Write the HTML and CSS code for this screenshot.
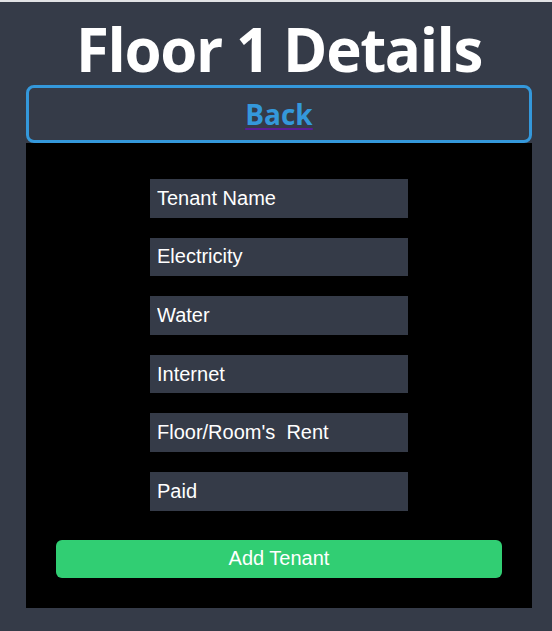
FILE: index.html
```html
<!DOCTYPE html>
<html lang="en">
<head>
<meta charset="utf-8">
<title>Floor 1 Details</title>
<link rel="stylesheet" href="styles.css">
</head>
<body>
<div class="page">
  <h1 class="title">Floor 1 Details</h1>
  <a class="back" href="#"><span class="back-text">Back</span></a>
  <form class="panel">
    <input class="field" type="text" placeholder="Tenant Name">
    <input class="field" type="text" placeholder="Electricity">
    <input class="field" type="text" placeholder="Water">
    <input class="field" type="text" placeholder="Internet">
    <input class="field" type="text" placeholder="Floor/Room's&nbsp; Rent">
    <input class="field" type="text" placeholder="Paid">
    <button class="add" type="button">Add Tenant</button>
  </form>
</div>
</body>
</html>
```

FILE: styles.css
```css
html, body {
  margin: 0;
  padding: 0;
  background: #353b48;
}

.page {
  border-top: 2px solid #e2e3e5;
  display: flex;
  flex-direction: column;
  padding: 0 20px 0 26px;
}

.title {
  margin: 0;
  padding-top: 10.5px;
  height: 72.5px;
  line-height: 72.5px;
  font-family: "Open Sans", sans-serif;
  font-weight: 700;
  font-size: 60px;
  letter-spacing: -1.4px;
  color: #ffffff;
  text-align: center;
  white-space: nowrap;
}

.back {
  display: block;
  height: 52px;
  border: 3px solid #3498db;
  border-radius: 8px;
  text-align: center;
  line-height: 52px;
  color: #551a8b;
  text-decoration: underline;
  text-decoration-color: #5a1e96;
  text-decoration-thickness: 2px;
  text-underline-offset: 3px;
  font-family: "Open Sans", sans-serif;
  font-weight: 700;
  font-size: 28px;
}

.back-text {
  color: #3498db;
}

.panel {
  margin: 0;
  background: #000000;
  display: flex;
  flex-direction: column;
  align-items: center;
  padding: 36px 30px 30px;
}

.field {
  box-sizing: border-box;
  width: 258px;
  height: 38.6px;
  margin: 0 0 20px;
  padding: 0 7px;
  border: none;
  outline: none;
  background: #353b48;
  color: #ffffff;
  font-family: "Liberation Sans", Arial, sans-serif;
  font-size: 20px;
}

.field::placeholder {
  color: #ffffff;
  opacity: 1;
}

.add {
  align-self: stretch;
  margin-top: 9.4px;
  height: 38px;
  border: none;
  border-radius: 6px;
  background: #31ce73;
  color: #ffffff;
  font-family: "Liberation Sans", Arial, sans-serif;
  font-size: 20px;
  padding: 0;
}
```
